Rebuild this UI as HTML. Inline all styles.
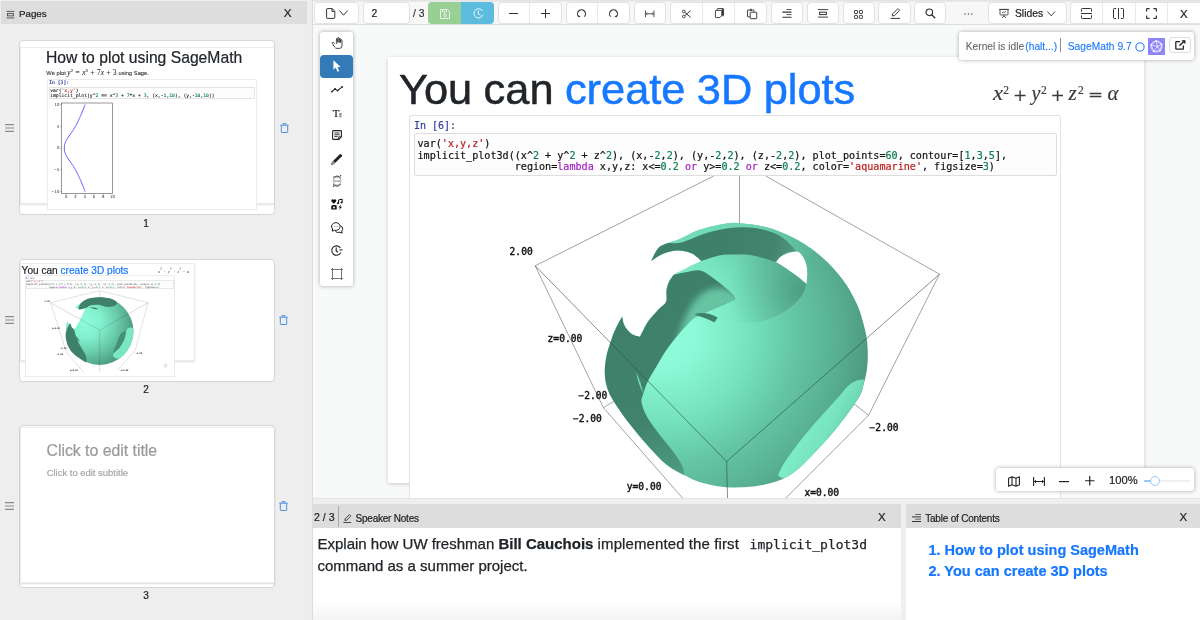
<!DOCTYPE html>
<html lang="en">
<head>
<meta charset="utf-8">
<title>Slides</title>
<style>
*{box-sizing:border-box;margin:0;padding:0}
html,body{width:1200px;height:620px;overflow:hidden;background:#fff}
body{position:relative;font-family:"Liberation Sans",sans-serif;color:#333;font-size:12px;-webkit-text-stroke:.2px}
.abs{position:absolute}
svg{display:block;overflow:visible}
#left,#toolbar,#canvas,#notes,#toc{will-change:transform}
/* left panel */
#left{left:0;top:0;width:307px;height:620px;background:#eee;overflow:hidden}
#lhead{left:1px;top:1px;width:306px;height:23.400px;background:#ddd}
.hx{font-size:11px;color:#222}
.card{background:#fff;border:1px solid #d6d6d6;border-radius:4px;overflow:hidden}
.pnum{font-size:10px;color:#222;width:20px;text-align:center}
/* dividers */
#vdiv{left:306.500px;top:0;width:6.500px;height:620px;background:#ededed;border-right:1px solid #dcdcdc}
#hdiv{left:313px;top:498px;width:887px;height:6px;background:#efefef;border-top:1px solid #e4e4e4}
#vdiv2{left:901px;top:504px;width:5.400px;height:116px;background:#efefef}
/* toolbar */
#toolbar{left:313px;top:0;width:887px;height:25.300px;background:#f7f7f7;border-bottom:1px solid #dedede}
.btn{position:absolute;top:2.300px;height:21.300px;background:#fff;border:1px solid #e2e2e2;border-radius:4px}
.sep{position:absolute;top:3px;width:1px;height:19.500px;background:#e8e8e8}
.ic{position:absolute}
/* canvas */
#canvas{left:313px;top:25px;width:887px;height:473px;border-top:1px solid #f8f9f9;background:#f8f9f9;overflow:hidden}
#slide{left:75px;top:31px;width:756px;height:426px;background:#fff;box-shadow:0 1px 4px rgba(0,0,0,.2)}
#cell{left:96px;top:89px;width:652px;height:440px;background:#fff;border:1px solid #e3e3e3;border-radius:2px}
.s{color:#ba2121}.n{color:#0a8050}.k{color:#a31fc4}
.sup{top:57px;font-size:11.5px;line-height:14px}.op{font-family:"DejaVu Serif",serif;font-size:17px}
.mono{font-family:"DejaVu Sans Mono","Liberation Mono",monospace}
/* bottom */
#notes{left:313px;top:504px;width:588px;height:116px;background:#fff}
#toc{left:906.400px;top:504px;width:293.600px;height:116px;background:#fff}
.phead{left:0;top:0;width:100%;height:24.200px;background:#ddd}
</style>
</head>
<body>

<!-- ================= LEFT PANEL ================= -->
<div id="left" class="abs">
  <div id="lhead" class="abs">
    <svg class="abs" style="left:5px;top:9.500px" width="9" height="7.800" viewBox="0 0 10 9"><path d="M0.5 0.5H9.5M0.5 8H9.5" stroke="#444" stroke-width="1" fill="none"/><rect x="1.5" y="3" width="7" height="2.6" fill="none" stroke="#444" stroke-width="1"/></svg>
    <div class="abs" style="left:18px;top:6.200px;font-size:9.800px;color:#222;line-height:14px;letter-spacing:-.05px">Pages</div>
    <div class="abs hx" style="left:282.800px;top:5.300px;line-height:14px;font-size:11.800px">X</div>
  </div>
  <!--LEFT-->
<div class="card abs" style="left:18.500px;top:39.500px;width:256px;height:175.500px"></div>
<div class="abs" style="left:20px;top:47px;width:254px;height:156.500px;border:1px solid #ececec;border-right:0;box-shadow:0 1px 1.500px rgba(0,0,0,.12)"></div>
<div class="abs" style="left:46px;top:47.500px;font-size:15.700px;line-height:19px;color:#212529;white-space:nowrap">How to plot using SageMath</div>
<div class="abs" style="left:46.300px;top:68.600px;font-size:5.780px;line-height:8px;color:#333;white-space:nowrap;-webkit-text-stroke:.1px">We plot <span style="font-family:'Liberation Serif',serif;font-size:7.200px;word-spacing:.5px;letter-spacing:.12px"><i>y</i><sup style="font-size:4.800px;line-height:0">2</sup> = <i>x</i><sup style="font-size:4.800px;line-height:0">3</sup> + 7<i>x</i> + 3</span> using Sage.</div>
<div class="abs" style="left:47px;top:78.500px;width:209.500px;height:131px;background:#fff;border:1px solid #ebebeb"></div>
<div class="abs mono" style="left:49.300px;top:80.300px;font-size:4.700px;line-height:6px;color:#303f9f;white-space:pre">In [3]:</div>
<div class="abs" style="left:48.500px;top:86.500px;width:206px;height:12.800px;border:1px solid #e4e4e4;background:#fdfdfd"></div>
<pre class="abs mono" style="left:50.200px;top:87.600px;font-size:4.720px;line-height:5.300px;color:#111;-webkit-text-stroke:.08px">var(<span class="s">'x,y'</span>)
implicit_plot(y^<span class="n">2</span> == x^<span class="n">3</span> + <span class="n">7</span>*x + <span class="n">3</span>, (x,-<span class="n">1</span>,<span class="n">10</span>), (y,-<span class="n">10</span>,<span class="n">10</span>))</pre>
<svg class="abs" style="left:0;top:0" width="307" height="230" viewBox="0 0 307 230"><rect x="61.6" y="103.0" width="50.8" height="90.4" fill="#fff" stroke="#333" stroke-width=".5"/><path d="M85.10 191.60L84.70 190.51L84.28 189.42L83.87 188.33L83.44 187.25L83.01 186.16L82.58 185.07L82.13 183.98L81.68 182.89L81.23 181.80L80.76 180.71L80.28 179.62L79.80 178.53L79.30 177.45L78.79 176.36L78.27 175.27L77.74 174.18L77.19 173.09L76.63 172.00L76.05 170.91L75.45 169.83L74.84 168.74L74.20 167.65L73.53 166.56L72.85 165.47L72.13 164.38L71.39 163.29L70.63 162.20L69.85 161.12L69.07 160.03L68.30 158.94L67.56 157.85L66.88 156.76L66.26 155.67L65.72 154.58L65.28 153.49L64.91 152.41L64.64 151.32L64.44 150.23L64.33 149.14L64.29 148.05L64.33 146.96L64.44 145.87L64.64 144.78L64.91 143.70L65.28 142.61L65.72 141.52L66.26 140.43L66.88 139.34L67.56 138.25L68.30 137.16L69.07 136.07L69.85 134.99L70.63 133.90L71.39 132.81L72.13 131.72L72.85 130.63L73.53 129.54L74.20 128.45L74.84 127.36L75.45 126.28L76.05 125.19L76.63 124.10L77.19 123.01L77.74 121.92L78.27 120.83L78.79 119.74L79.30 118.65L79.80 117.57L80.28 116.48L80.76 115.39L81.23 114.30L81.68 113.21L82.13 112.12L82.58 111.03L83.01 109.94L83.44 108.86L83.87 107.77L84.28 106.68L84.70 105.59L85.10 104.50" fill="none" stroke="#4b4bff" stroke-width=".9"/><path d="M60.4 104.5H61.6M60.4 126.3H61.6M60.4 148.1H61.6M60.4 169.8H61.6M60.4 191.6H61.6M66.2 193.4V194.6M75.5 193.4V194.6M84.7 193.4V194.6M93.9 193.4V194.6M103.2 193.4V194.6M112.4 193.4V194.6" stroke="#333" stroke-width=".4" fill="none"/><g font-family="'DejaVu Sans',sans-serif" font-size="3.900" fill="#222"><text x="59.4" y="105.7" text-anchor="end">10</text><text x="59.4" y="127.5" text-anchor="end">5</text><text x="59.4" y="149.2" text-anchor="end">0</text><text x="59.4" y="171.0" text-anchor="end">−5</text><text x="59.4" y="192.8" text-anchor="end">−10</text><text x="66.2" y="198.4" text-anchor="middle">0</text><text x="75.5" y="198.4" text-anchor="middle">2</text><text x="84.7" y="198.4" text-anchor="middle">4</text><text x="93.9" y="198.4" text-anchor="middle">6</text><text x="103.2" y="198.4" text-anchor="middle">8</text><text x="112.4" y="198.4" text-anchor="middle">10</text></g></svg>
<div class="pnum abs" style="left:136px;top:217.500px;line-height:12px">1</div>
<svg class="ic" style="left:5px;top:123.7px" width="9" height="8" viewBox="0 0 9 8"><path d="M0 .6H9M0 4H9M0 7.400H9" stroke="#8a8a8a" stroke-width="1.100" fill="none"/></svg>
<svg class="ic" style="left:279.5px;top:123px" width="9" height="10" viewBox="0 0 9 10"><path d="M.3 2.200H8.700M3 2V.9a.4.400 0 0 1 .4-.4H5.600a.4.400 0 0 1 .4.400V2M1.300 2.400V8.800a.7.700 0 0 0 .7.700H7a.7.700 0 0 0 .7-.7V2.400" fill="none" stroke="#4a8fe0" stroke-width="1"/></svg>
<div class="card abs" style="left:18.500px;top:258.500px;width:256px;height:123px"></div>
<div class="abs" style="left:20px;top:262.500px;width:174.500px;height:98px;background:#fff;border:1px solid #ececec;box-shadow:0 1px 1.500px rgba(0,0,0,.14)"></div>
<div class="abs" style="left:21.600px;top:264.700px;font-size:10.100px;line-height:12px;color:#212529;white-space:nowrap">You can <span style="color:#1677ff">create 3D plots</span></div>
<div class="abs" style="left:158px;top:269px;-webkit-text-stroke:0;font-family:'Liberation Serif',serif;font-size:4.600px;line-height:6px;color:#444;white-space:nowrap;letter-spacing:.25px"><i>x</i><sup style="font-size:3px;line-height:0">2</sup> + <i>y</i><sup style="font-size:3px;line-height:0">2</sup> + <i>z</i><sup style="font-size:3px;line-height:0">2</sup> = <i>α</i></div>
<div class="abs" style="left:24.500px;top:275.300px;width:150px;height:101.500px;background:#fff;border:1px solid #ebebeb"></div>
<div class="abs mono" style="left:25.800px;top:276.500px;font-size:2.320px;line-height:3px;color:#303f9f;white-space:pre;-webkit-text-stroke:0">In [6]:</div>
<div class="abs" style="left:25.500px;top:279.600px;width:148px;height:9.600px;border:1px solid #e9e9e9;background:#fdfdfd"></div>
<pre class="abs mono" style="left:26.500px;top:281.400px;font-size:2.320px;line-height:2.760px;color:#333;-webkit-text-stroke:0">var(<span class="s">'x,y,z'</span>)
implicit_plot3d((x^<span class="n">2</span> + y^<span class="n">2</span> + z^<span class="n">2</span>), (x,-<span class="n">2</span>,<span class="n">2</span>), (y,-<span class="n">2</span>,<span class="n">2</span>), (z,-<span class="n">2</span>,<span class="n">2</span>), plot_points=<span class="n">60</span>, contour=[<span class="n">1</span>,<span class="n">3</span>,<span class="n">5</span>],
                region=<span class="k">lambda</span> x,y,z: x&lt;=<span class="n">0.2</span> <span class="k">or</span> y&gt;=<span class="n">0.2</span> <span class="k">or</span> z&lt;=<span class="n">0.2</span>, color=<span class="s">'aquamarine'</span>, figsize=<span class="n">3</span>)</pre>
<svg class="abs" style="left:0;top:240px" width="307" height="160" viewBox="0 240 307 160">
<defs><radialGradient id="gMini" gradientUnits="userSpaceOnUse" cx="86" cy="322" r="54"><stop offset="0" stop-color="#90fdda"/><stop offset=".3" stop-color="#82efcc"/><stop offset=".6" stop-color="#66c8a7"/><stop offset=".85" stop-color="#4f9f84"/><stop offset="1" stop-color="#448b73"/></radialGradient></defs>
<path d="M99.700 290.600L50.500 302.700L66.600 352.700L83.500 372.100M99.700 290.600L148 302.700L135.200 350.300L117.400 370.500M99.700 290.600V298" fill="none" stroke="#b5b5b5" stroke-width=".4"/>
<circle cx="99.600" cy="331.100" r="33.800" fill="url(#gMini)"/>
<path d="M78.9 309.3L85.3 308.4L82.7 314.5L79.5 320.9L75.6 327.4L74.3 330.0L71.8 327.4L70.2 323.8L64.0 320.0L70.0 304.0Z" fill="#fff"/>
<path d="M78.9 309.3C78.2 308.5 79.4 305.2 80.8 303.5C82.2 301.8 84.2 300.0 87.2 299.0C90.2 298.0 94.9 297.4 98.8 297.3C102.7 297.2 107.4 297.8 110.4 298.6C113.4 299.4 116.2 301.1 116.9 302.3C117.6 303.6 116.0 305.4 114.3 306.1C112.6 306.9 109.2 307.0 106.6 306.8C104.0 306.6 101.4 305.1 98.8 304.8C96.2 304.5 93.3 304.6 91.1 305.2C88.8 305.8 87.3 307.4 85.3 308.1C83.3 308.8 79.7 310.1 78.9 309.3Z" fill="#3f806b"/>
<path d="M70.2 323.8C69.5 324.0 68.1 326.8 67.3 328.7C66.5 330.6 65.6 332.5 65.6 335.1C65.6 337.7 66.3 341.4 67.3 344.2C68.3 347.0 69.8 349.5 71.8 351.9C73.8 354.2 77.2 356.6 79.5 358.3C81.8 360.0 84.8 362.1 85.9 362.2C87.1 362.3 86.5 360.3 86.4 359.0C86.3 357.7 86.2 356.6 85.3 354.5C84.4 352.4 82.3 349.5 80.8 346.7C79.3 343.9 77.4 340.5 76.3 337.7C75.2 334.9 75.0 331.7 74.3 330.0C73.5 328.3 72.5 328.4 71.8 327.4C71.1 326.4 71.0 323.6 70.2 323.8Z" fill="#3f806b"/>
<path d="M124.6 331.6C125.6 331.0 126.6 328.8 126.6 330.0C126.6 331.2 125.8 336.0 124.6 339.0C123.4 342.0 121.3 345.6 119.5 348.0C117.7 350.4 114.7 352.8 113.7 353.2C112.7 353.6 113.2 352.3 113.7 350.6C114.2 348.9 115.7 345.7 116.9 342.9C118.1 340.1 119.5 335.7 120.8 333.8C122.1 331.9 123.6 332.2 124.6 331.6Z" fill="#468f77"/>
<path d="M126.6 330.0C127.5 328.1 128.9 327.8 130.0 327.6C131.1 327.4 132.7 327.4 133.2 329.0C133.7 330.6 133.6 334.1 133.0 337.0C132.4 339.9 131.0 343.5 129.5 346.5C128.0 349.5 125.9 353.0 124.0 355.0C122.1 357.0 119.7 358.3 118.0 358.6C116.3 358.9 114.4 357.9 113.7 357.0C113.0 356.1 112.7 354.7 113.7 353.2C114.7 351.7 117.7 350.4 119.5 348.0C121.3 345.6 123.4 342.0 124.6 339.0C125.8 336.0 125.7 331.9 126.6 330.0Z" fill="#7ae6c2"/>
<path d="M89.800 307.400C93 306.800 96 307.600 98.800 309.300C95.500 309.300 92.500 308.600 89.800 307.400ZM74.300 334.500C75.500 338 77.500 340.500 80.100 341.600C78.600 339 76.500 336.500 74.300 334.500Z" fill="#3f806b"/>
<path d="M50.500 302.700L99.700 330.200L148 302.700M99.700 330.200V372.100" fill="none" stroke="#333" stroke-opacity=".45" stroke-width=".4"/>
<g font-family="'DejaVu Sans Mono',monospace" font-weight="bold" font-size="2.200" fill="#222"><text x="44.600" y="301.500">2.00</text><text x="52" y="329">z=0.00</text><text x="60" y="349.300">−2.00</text><text x="56.500" y="354.500">−2.00</text><text x="70" y="370.800">y=0.00</text><text x="120.500" y="370.800">x=0.00</text><text x="135.500" y="354.300">−2.00</text></g>
<path d="M164.600 364.300H166.600V366.800H164.600Z" fill="none" stroke="#aaa" stroke-width=".4"/>
</svg>
<div class="pnum abs" style="left:136px;top:383.600px;line-height:12px">2</div>
<svg class="ic" style="left:5px;top:316px" width="9" height="8" viewBox="0 0 9 8"><path d="M0 .6H9M0 4H9M0 7.400H9" stroke="#8a8a8a" stroke-width="1.100" fill="none"/></svg>
<svg class="ic" style="left:279.3px;top:315.3px" width="9" height="10" viewBox="0 0 9 10"><path d="M.3 2.200H8.700M3 2V.9a.4.400 0 0 1 .4-.4H5.600a.4.400 0 0 1 .4.400V2M1.300 2.400V8.800a.7.700 0 0 0 .7.700H7a.7.700 0 0 0 .7-.7V2.400" fill="none" stroke="#4a8fe0" stroke-width="1"/></svg>
<div class="card abs" style="left:18.500px;top:424.500px;width:256px;height:163px"></div>
<div class="abs" style="left:20px;top:427px;width:254.500px;height:155.500px;border:1px solid #ececec;border-right:0;box-shadow:0 1px 1.500px rgba(0,0,0,.14)"></div>
<div class="abs" style="left:46.500px;top:440.500px;font-size:15.800px;line-height:19px;color:#999;white-space:nowrap">Click to edit title</div>
<div class="abs" style="left:46.700px;top:467.300px;font-size:9.450px;line-height:12px;color:#a6a6a6;white-space:nowrap">Click to edit subtitle</div>
<div class="pnum abs" style="left:136px;top:589.800px;line-height:12px">3</div>
<svg class="ic" style="left:5px;top:501.8px" width="9" height="8" viewBox="0 0 9 8"><path d="M0 .6H9M0 4H9M0 7.400H9" stroke="#8a8a8a" stroke-width="1.100" fill="none"/></svg>
<svg class="ic" style="left:279.3px;top:500.8px" width="9" height="10" viewBox="0 0 9 10"><path d="M.3 2.200H8.700M3 2V.9a.4.400 0 0 1 .4-.4H5.600a.4.400 0 0 1 .4.400V2M1.300 2.400V8.800a.7.700 0 0 0 .7.700H7a.7.700 0 0 0 .7-.7V2.400" fill="none" stroke="#4a8fe0" stroke-width="1"/></svg>
<!--/LEFT-->
</div>

<div id="vdiv" class="abs"></div>

<!-- ================= TOOLBAR ================= -->
<div id="toolbar" class="abs">
  <!-- coordinates inside toolbar are page x - 313 -->
  <div class="abs" style="left:0;top:0;width:887px;height:2.300px;background:linear-gradient(to bottom,#e2e2e2,#ebebeb)"></div>
  <div class="btn" style="left:1px;width:45px"></div>
  <svg class="ic" style="left:13px;top:8px" width="10" height="11" viewBox="0 0 10 11"><path d="M1.2 0.6H6.2L8.8 3.2V9.6a.8.8 0 0 1-.8.8H1.2a.6.6 0 0 1-.6-.6V1.2a.6.6 0 0 1 .6-.6Z" fill="none" stroke="#333" stroke-width="1"/><path d="M6 0.8V3.4H8.6" fill="none" stroke="#333" stroke-width="1"/></svg>
  <svg class="ic" style="left:26px;top:10px" width="9" height="6" viewBox="0 0 9 6"><path d="M0.4 0.5L4.5 5.2L8.6 0.5" fill="none" stroke="#333" stroke-width="1"/></svg>

  <div class="btn" style="left:50px;width:47px"></div>
  <div class="abs" style="left:58.5px;top:7px;font-size:10.3px;line-height:13px;color:#222">2</div>
  <div class="abs" style="left:100px;top:7px;font-size:10.3px;line-height:13px;color:#333">/ 3</div>

  <div class="abs" style="left:115px;top:2px;width:33px;height:22px;background:#98cf94;border-radius:4px 0 0 4px"></div>
  <div class="abs" style="left:148px;top:2px;width:33px;height:22px;background:#5bbcdd;border-radius:0 4px 4px 0"></div>
  <svg class="ic" style="left:127px;top:9px" width="10" height="10" viewBox="0 0 10 10"><path d="M0.5 0.5H7.5L9.5 2.5V9.5H0.5Z" fill="none" stroke="#e9f5e8" stroke-width="1"/><path d="M2.5 0.5V3H6.5V0.5" fill="none" stroke="#e9f5e8" stroke-width="1"/><circle cx="5" cy="6.2" r="1.3" fill="none" stroke="#e9f5e8" stroke-width="1"/></svg>
  <svg class="ic" style="left:160px;top:8px" width="11" height="11" viewBox="0 0 11 11"><path d="M9.6 3.2A4.6 4.6 0 1 0 9.9 6.8" fill="none" stroke="#eef8fc" stroke-width="1"/><path d="M5.3 2.6V5.8L7.6 7.3" fill="none" stroke="#eef8fc" stroke-width="1"/></svg>

  <!-- zoom out / in -->
  <div class="btn" style="left:184.5px;width:64.5px"></div><div class="sep" style="left:216px"></div>
  <svg class="ic" style="left:196px;top:13px" width="9" height="1"><rect width="9" height="1" fill="#333"/></svg>
  <svg class="ic" style="left:228px;top:9px" width="9" height="9" viewBox="0 0 9 9"><path d="M0 4.5H9M4.5 0V9" stroke="#333" stroke-width="1" fill="none"/></svg>

  <!-- undo / redo -->
  <div class="btn" style="left:252.5px;width:64.5px"></div><div class="sep" style="left:284px"></div>
  <svg class="ic" style="left:263px;top:8px" width="11" height="11" viewBox="0 0 11 11"><path d="M2.6 8.6A4 4 0 1 1 8.4 8.6" fill="none" stroke="#333" stroke-width="1.1"/><path d="M1.6 7.2L2.7 9.6L4.6 8.2Z" fill="#333"/></svg>
  <svg class="ic" style="left:295px;top:8px" width="11" height="11" viewBox="0 0 11 11"><path d="M2.6 8.6A4 4 0 1 1 8.4 8.6" fill="none" stroke="#333" stroke-width="1.1"/><path d="M9.4 7.2L8.3 9.6L6.4 8.2Z" fill="#333"/></svg>

  <!-- fit width -->
  <div class="btn" style="left:320.6px;width:32.2px"></div>
  <svg class="ic" style="left:332px;top:9.700px" width="9.500" height="7.600" viewBox="0 0 11 9"><path d="M0.5 0.5V8.5M10.5 0.5V8.5M1.5 4.5H9.5" stroke="#333" stroke-width="1" fill="none"/><path d="M2.6 3.2L1.2 4.5L2.6 5.8M8.4 3.2L9.8 4.5L8.4 5.8" stroke="#333" stroke-width=".9" fill="none"/></svg>

  <!-- cut / copy / paste -->
  <div class="btn" style="left:356.5px;width:97.5px"></div><div class="sep" style="left:389px"></div><div class="sep" style="left:421px"></div>
  <svg class="ic" style="left:369px;top:8.500px" width="9.600" height="10" viewBox="0 0 11 11"><circle cx="2" cy="2.6" r="1.5" fill="none" stroke="#333" stroke-width="1"/><circle cx="2" cy="8.4" r="1.5" fill="none" stroke="#333" stroke-width="1"/><path d="M3.2 3.6L10 9.4M3.2 7.4L10 1.6" stroke="#333" stroke-width="1.1" fill="none"/></svg>
  <svg class="ic" style="left:401.500px;top:8.300px" width="9" height="10.200" viewBox="0 0 10 11"><path d="M2.5 2.5V1a.5.5 0 0 1 .5-.5H9a.5.5 0 0 1 .5.5V8a.5.5 0 0 1-.5.5H7.6" fill="none" stroke="#333" stroke-width="1"/><path d="M1 2.5H7a.5.5 0 0 1 .5.5V8L5.5 10.5H1a.5.5 0 0 1-.5-.5V3a.5.5 0 0 1 .5-.5Z" fill="none" stroke="#333" stroke-width="1"/><rect x="7.6" y="1" width="1.6" height="7" fill="#333"/></svg>
  <svg class="ic" style="left:433.500px;top:7.600px" width="10.200" height="11.200" viewBox="0 0 11 12"><path d="M3.2 9.5H1a.5.5 0 0 1-.5-.5V2.5A.5.5 0 0 1 1 2H2.4M5.8 2H7a.5.5 0 0 1 .5.5V4" fill="none" stroke="#333" stroke-width="1"/><path d="M2.6 2.6L4.1.8L5.6 2.6Z" fill="none" stroke="#333" stroke-width="1"/><path d="M4 4.5H10a.5.5 0 0 1 .5.5V11a.5.5 0 0 1-.5.5H4a.5.5 0 0 1-.5-.5V5a.5.5 0 0 1 .5-.5Z" fill="#fff" stroke="#333" stroke-width="1"/></svg>

  <!-- toc -->
  <div class="btn" style="left:457.7px;width:32.2px"></div>
  <svg class="ic" style="left:469px;top:9px" width="10" height="9" viewBox="0 0 10 9"><path d="M4.5 0.5H9.5M4.5 5.6H9.5" stroke="#555" stroke-width="1" fill="none"/><path d="M0.4 3.1H9.5M0.4 8.2H9.5" stroke="#333" stroke-width="1.1" fill="none"/></svg>
  <!-- pages -->
  <div class="btn" style="left:493.6px;width:32.2px"></div>
  <svg class="ic" style="left:505px;top:9px" width="10" height="9" viewBox="0 0 10 9"><path d="M0 0.6H10M0 8.1H10" stroke="#444" stroke-width="1" fill="none"/><rect x="1.6" y="3.2" width="6.8" height="2.4" fill="none" stroke="#333" stroke-width="1"/></svg>
  <!-- grid -->
  <div class="btn" style="left:529.5px;width:32.2px"></div>
  <svg class="ic" style="left:541px;top:9.5px" width="9" height="9" viewBox="0 0 10 10"><rect x=".5" y=".5" width="3.4" height="3.4" rx=".6" fill="none" stroke="#333"/><rect x="6" y=".5" width="3.4" height="3.4" rx=".6" fill="none" stroke="#333"/><rect x=".5" y="6" width="3.4" height="3.4" rx=".6" fill="none" stroke="#333"/><rect x="6" y="6" width="3.4" height="3.4" rx=".6" fill="none" stroke="#333"/></svg>
  <!-- pen -->
  <div class="btn" style="left:565.4px;width:32.2px"></div>
  <svg class="ic" style="left:577px;top:8px" width="11" height="11" viewBox="0 0 11 11"><path d="M0.5 10.4H10" stroke="#333" stroke-width="1" fill="none"/><path d="M2.2 7.8L2.6 5.8L7.4 1.1a.8.8 0 0 1 1.1 0l.7.7a.8.8 0 0 1 0 1.1L4.4 7.7Z" fill="none" stroke="#333" stroke-width="1"/></svg>
  <!-- search -->
  <div class="btn" style="left:601.3px;width:32.2px"></div>
  <svg class="ic" style="left:612px;top:8px" width="11" height="11" viewBox="0 0 11 11"><circle cx="4.3" cy="4.3" r="3.3" fill="none" stroke="#333" stroke-width="1.2"/><path d="M6.8 6.8L10.2 10.2" stroke="#333" stroke-width="1.3" fill="none"/></svg>
  <!-- ellipsis -->
  <svg class="ic" style="left:651px;top:13px" width="9" height="2" viewBox="0 0 9 2"><circle cx="1" cy="1" r=".7" fill="#444"/><circle cx="4.4" cy="1" r=".7" fill="#444"/><circle cx="7.8" cy="1" r=".7" fill="#444"/></svg>

  <!-- Slides dropdown -->
  <div class="btn" style="left:674.5px;width:79.2px"></div>
  <svg class="ic" style="left:686px;top:9px" width="10" height="9.2" viewBox="0 0 12 11"><path d="M0 0.5H12" stroke="#333" stroke-width="1" fill="none"/><rect x="1.2" y=".5" width="9.6" height="6.6" rx=".8" fill="none" stroke="#333" stroke-width="1"/><path d="M3.4 4.9L5 3.4L6.3 4.6L8.4 2.6" stroke="#333" stroke-width=".9" fill="none"/><path d="M6 7.2V8.6M3.6 10.6L6 8.4L8.4 10.6" stroke="#333" stroke-width="1" fill="none"/></svg>
  <div class="abs" style="left:702px;top:7px;font-size:10.3px;line-height:13px;color:#222">Slides</div>
  <svg class="ic" style="left:734px;top:10.5px" width="8.5" height="5.6" viewBox="0 0 9 6"><path d="M0.4 0.5L4.5 5.2L8.6 0.5" fill="none" stroke="#333" stroke-width="1"/></svg>

  <!-- frame controls -->
  <div class="btn" style="left:757px;width:131px;border-radius:4px 0 0 4px;border-right:0"></div>
  <div class="sep" style="left:789px"></div><div class="sep" style="left:822px"></div><div class="sep" style="left:854px"></div>
  <svg class="ic" style="left:768px;top:8px" width="11" height="11" viewBox="0 0 11 11"><path d="M0.5 3.6V1.3a.8.8 0 0 1 .8-.8H9.7a.8.8 0 0 1 .8.8V3.6M0.5 7.4V9.7a.8.8 0 0 0 .8.8H9.7a.8.8 0 0 0 .8-.8V7.4M0 5.5H11" fill="none" stroke="#333" stroke-width="1"/></svg>
  <svg class="ic" style="left:800px;top:8px" width="11" height="11" viewBox="0 0 11 11"><path d="M3.2.5H1.3a.8.8 0 0 0-.8.8V9.7a.8.8 0 0 0 .8.8H3.2M7.8.5H9.7a.8.8 0 0 1 .8.8V9.7a.8.8 0 0 1-.8.8H7.8M5.5 0V11" fill="none" stroke="#333" stroke-width="1"/></svg>
  <svg class="ic" style="left:833px;top:8px" width="11" height="11" viewBox="0 0 11 11"><path d="M0.6 3.6V1.2a.6.6 0 0 1 .6-.6H3.6M7.4.6H9.8a.6.6 0 0 1 .6.6V3.6M10.4 7.4V9.8a.6.6 0 0 1-.6.6H7.4M3.6 10.4H1.2a.6.6 0 0 1-.6-.6V7.4" fill="none" stroke="#333" stroke-width="1.2"/></svg>
  <div class="abs hx" style="left:867px;top:6.600px;line-height:14px;font-size:11.500px">X</div>
</div>

<!-- ================= CANVAS ================= -->
<div id="canvas" class="abs">
  <div id="slide" class="abs"></div>
  <div id="title" class="abs" style="left:86px;top:37px;font-size:43.4px;line-height:52px;color:#212529;white-space:nowrap;word-spacing:-.7px;-webkit-text-stroke:.5px">You can <span style="color:#1677ff">create 3D plots</span></div>
  <!-- formula -->
  <div id="formula" class="abs" style="left:0;top:0;-webkit-text-stroke:.18px;font-family:'Liberation Serif',serif;color:#3a3a3a;font-size:20px;line-height:24px;white-space:nowrap">
    <i class="abs" style="left:680px;top:55px;font-size:21px;transform:scaleX(1.08);transform-origin:0 0">x</i><span class="abs sup" style="left:690.3px">2</span>
    <span class="abs op" style="left:700px;top:56.5px">+</span>
    <i class="abs" style="left:718.5px;top:55px">y</i><span class="abs sup" style="left:728px">2</span>
    <span class="abs op" style="left:737.5px;top:56.5px">+</span>
    <i class="abs" style="left:755.5px;top:55px;font-size:21px">z</i><span class="abs sup" style="left:765px">2</span>
    <span class="abs op" style="left:775px;top:56px;transform:scaleX(1.06);transform-origin:0 0">=</span>
    <i class="abs" style="left:794.5px;top:55px;font-size:21px">α</i>
  </div>
  <div id="cell" class="abs">
    <div class="abs mono" style="left:4px;top:4px;font-size:10px;line-height:12px;color:#303f9f;white-space:pre">In [6]:</div>
    <div class="abs" style="left:3.5px;top:17px;width:643px;height:43px;border:1px solid #ddd;border-radius:2px;background:#fdfdfd"></div>
    <pre class="abs mono" style="left:7.5px;top:21.900px;font-size:10.1px;line-height:11.75px;color:#111">var(<span class="s">'x,y,z'</span>)
implicit_plot3d((x^<span class="n">2</span> + y^<span class="n">2</span> + z^<span class="n">2</span>), (x,-<span class="n">2</span>,<span class="n">2</span>), (y,-<span class="n">2</span>,<span class="n">2</span>), (z,-<span class="n">2</span>,<span class="n">2</span>), plot_points=<span class="n">60</span>, contour=[<span class="n">1</span>,<span class="n">3</span>,<span class="n">5</span>],
                region=<span class="k">lambda</span> x,y,z: x&lt;=<span class="n">0.2</span> <span class="k">or</span> y&gt;=<span class="n">0.2</span> <span class="k">or</span> z&lt;=<span class="n">0.2</span>, color=<span class="s">'aquamarine'</span>, figsize=<span class="n">3</span>)</pre>
  </div>

  <!--PLOT3D--><svg id="plot3d" class="abs" style="left:0;top:0" width="887" height="472" viewBox="313 26 887 472">
<defs>
<radialGradient id="gBody" gradientUnits="userSpaceOnUse" cx="664" cy="334" r="232">
<stop offset="0" stop-color="#90fdda"/><stop offset=".14" stop-color="#8dfad7"/><stop offset=".38" stop-color="#75e1bd"/><stop offset=".56" stop-color="#64c6a5"/><stop offset=".72" stop-color="#5ab494"/><stop offset=".85" stop-color="#50a086"/><stop offset=".94" stop-color="#468f77"/><stop offset="1" stop-color="#3f836c"/>
</radialGradient>
<linearGradient id="gBand" gradientUnits="userSpaceOnUse" x1="693" y1="297" x2="706" y2="316">
<stop offset="0" stop-color="#3f806b"/><stop offset="1" stop-color="#62bd9d"/>
</linearGradient>
<linearGradient id="gD2" gradientUnits="userSpaceOnUse" x1="730" y1="240" x2="802" y2="252">
<stop offset="0" stop-color="#3f806b"/><stop offset=".6" stop-color="#42856e"/><stop offset="1" stop-color="#549f86"/>
</linearGradient>
<linearGradient id="gD1" gradientUnits="userSpaceOnUse" x1="620" y1="330" x2="680" y2="470">
<stop offset="0" stop-color="#3f806b"/><stop offset=".6" stop-color="#40826c"/><stop offset="1" stop-color="#4c9a80"/>
</linearGradient>
<linearGradient id="gEll" gradientUnits="userSpaceOnUse" x1="800" y1="420" x2="850" y2="445">
<stop offset="0" stop-color="#80edc9"/><stop offset=".5" stop-color="#78e4c0"/><stop offset="1" stop-color="#66c9a8"/>
</linearGradient>
<radialGradient id="gM" gradientUnits="userSpaceOnUse" cx="800" cy="292" r="72">
<stop offset="0" stop-color="#3c7f68" stop-opacity=".5"/><stop offset=".45" stop-color="#3c7f68" stop-opacity=".24"/><stop offset="1" stop-color="#3c7f68" stop-opacity="0"/>
</radialGradient>
<linearGradient id="gRim" gradientUnits="userSpaceOnUse" x1="670" y1="240" x2="810" y2="250">
<stop offset="0" stop-color="#74dfbb"/><stop offset=".6" stop-color="#6cd3b0"/><stop offset="1" stop-color="#5cb797"/>
</linearGradient>
<clipPath id="cpD13"><path d="M673.7 274.7C675.7 274.3 681.4 273.0 685.8 272.3C690.2 271.6 695.2 269.5 700.0 270.6C704.8 271.7 710.1 276.0 714.5 279.0C718.9 282.0 723.4 285.9 726.6 288.7C729.8 291.5 732.5 294.2 733.9 296.0C735.3 297.8 734.8 299.0 735.0 299.6C733.2 300.4 728.4 302.6 724.2 304.4C720.0 306.2 713.7 308.7 709.7 310.5C705.7 312.3 702.6 314.1 700.0 315.3C697.4 316.6 696.3 316.2 693.9 318.0C691.5 319.8 688.5 323.0 685.8 325.9C683.1 328.8 681.2 330.8 677.7 335.2C674.2 339.6 669.0 346.2 665.1 352.0C661.2 357.8 657.5 364.8 654.5 369.8C651.5 374.8 649.3 378.1 647.4 382.2C645.5 386.3 644.0 391.2 643.0 394.6C642.0 398.0 641.0 398.7 641.6 402.4C642.2 406.1 644.0 411.3 646.9 416.6C649.8 421.9 654.9 428.4 659.3 434.3C663.7 440.2 669.7 446.7 673.5 452.0C677.3 457.3 680.5 462.3 682.3 466.2C684.1 470.1 683.8 473.6 684.1 475.1C681.1 473.3 672.3 469.2 666.4 464.5C660.5 459.8 654.6 453.2 648.7 446.7C642.8 440.2 636.2 432.3 630.9 425.5C625.6 418.7 620.5 411.9 616.7 406.0C612.9 400.1 609.9 395.4 607.9 390.0C605.9 384.6 605.0 379.0 604.8 373.3C604.6 367.6 605.4 361.5 606.6 355.6C607.8 349.7 610.2 342.6 611.9 337.9C613.5 333.1 614.8 330.7 616.5 327.1C618.2 323.6 621.2 318.4 622.1 316.6C622.5 318.1 623.0 322.7 624.5 325.5C626.0 328.3 628.5 331.6 631.0 333.5C633.5 335.4 638.3 336.2 639.8 336.8C640.2 336.0 640.8 334.6 642.3 331.9C643.8 329.2 646.0 324.4 648.7 320.6C651.4 316.9 655.7 312.2 658.4 309.4C661.1 306.6 663.7 304.6 664.8 303.7C665.1 303.0 666.2 302.0 666.5 299.7C666.8 297.4 666.1 293.0 666.5 290.0C666.9 287.0 667.7 284.4 668.9 281.9C670.1 279.3 672.9 275.9 673.7 274.7Z"/></clipPath>
<filter id="fBlur" x="-30%" y="-30%" width="160%" height="160%"><feGaussianBlur stdDeviation="3.2"/></filter>
<clipPath id="cpPlot"><rect x="410.5" y="176" width="649.5" height="330"/></clipPath>
</defs>
<g clip-path="url(#cpPlot)">
<path d="M535.2 265.8L713.7 176M739.5 176V224M765.7 176L939.5 274.2L868.6 415.2M535.2 265.8L603.4 407.7L682.3 497.8L690 506.600M868.6 415.2L786 497.8L777 506.800M603.4 407.7L616 400M868.6 415.2L853 403" fill="none" stroke="#8a8a8a" stroke-width=".8"/>
<path d="M740.0 223.2C744.4 223.9 757.7 224.8 766.6 227.2C775.5 229.6 785.2 233.8 793.2 237.8C801.2 241.8 808.0 246.2 814.5 251.1C821.0 256.0 826.9 261.4 832.2 267.0C837.5 272.6 842.6 279.2 846.4 284.8C850.2 290.4 853.0 296.3 855.2 300.7C857.4 305.1 858.0 305.7 859.8 311.3C861.6 316.9 864.7 327.5 866.0 334.3C867.3 341.1 867.6 346.1 867.8 352.0C867.9 357.9 867.6 364.2 866.9 369.8C866.1 375.4 864.4 381.4 863.3 385.7C862.1 389.9 862.1 391.3 860.0 395.3C857.9 399.3 855.2 403.3 850.7 409.5C846.2 415.7 838.9 425.5 833.0 432.6C827.1 439.7 820.8 446.1 815.2 452.0C809.6 457.9 804.3 463.7 799.3 468.0C794.3 472.3 789.8 475.3 785.1 477.8C780.4 480.3 776.2 481.6 770.9 483.1C765.6 484.6 760.6 485.9 753.2 486.6C745.8 487.3 735.5 487.9 726.6 487.2C717.7 486.5 707.1 484.2 700.0 482.2C692.9 480.2 689.7 478.1 684.1 475.1C678.5 472.2 672.3 469.2 666.4 464.5C660.5 459.8 654.6 453.2 648.7 446.7C642.8 440.2 636.2 432.3 630.9 425.5C625.6 418.7 620.5 411.9 616.7 406.0C612.9 400.1 609.9 395.4 607.9 390.0C605.9 384.6 605.0 379.0 604.8 373.3C604.6 367.6 605.4 361.5 606.6 355.6C607.8 349.7 610.2 342.6 611.9 337.9C613.5 333.1 614.8 330.7 616.5 327.1C618.2 323.6 621.2 318.4 622.1 316.6C622.5 318.1 623.0 322.7 624.5 325.5C626.0 328.3 628.5 331.6 631.0 333.5C633.5 335.4 638.3 336.2 639.8 336.8C640.2 336.0 640.8 334.6 642.3 331.9C643.8 329.2 646.0 324.4 648.7 320.6C651.4 316.9 655.7 312.2 658.4 309.4C661.1 306.6 663.7 304.6 664.8 303.7C665.1 303.0 666.2 302.0 666.5 299.7C666.8 297.4 666.1 293.0 666.5 290.0C666.9 287.0 667.7 284.4 668.9 281.9C670.1 279.3 672.9 275.9 673.7 274.7C674.4 274.3 675.4 273.5 677.7 272.3C680.0 271.1 683.5 269.3 687.4 267.4C691.3 265.5 698.8 262.1 701.1 261.0C700.6 260.4 699.6 259.1 697.9 257.7C696.1 256.3 694.0 254.1 690.6 252.9C687.2 251.7 682.3 250.4 677.7 250.5C673.1 250.6 667.6 251.9 663.2 253.7C658.8 255.4 653.1 259.8 651.1 261.0C652.3 258.8 655.6 251.0 658.4 248.0C661.2 245.0 664.5 244.5 667.9 243.1C671.2 241.7 673.2 241.8 678.5 239.6C683.8 237.4 691.8 232.5 699.8 229.8C707.8 227.1 719.7 224.7 726.4 223.6C733.1 222.5 737.7 223.3 740.0 223.2Z" fill="url(#gBody)"/>
<path d="M667.9 243.1C669.7 242.5 673.2 241.8 678.5 239.6C683.8 237.4 691.8 232.5 699.8 229.8C707.8 227.1 719.7 224.7 726.4 223.6C733.1 222.5 733.3 222.6 740.0 223.2C746.7 223.8 757.7 224.8 766.6 227.2C775.5 229.6 785.2 233.8 793.2 237.8C801.2 241.8 811.0 248.9 814.5 251.1L804 259.7C794.0 248.7 787.0 239.9 780.0 236.0C773.0 232.1 763.1 229.3 754.8 228.0C746.5 226.7 738.3 227.1 730.0 228.0C721.7 228.9 713.1 231.0 705.1 233.4C697.1 235.8 688.2 240.6 682.0 242.2C675.8 243.8 670.2 242.9 667.9 243.1Z" fill="url(#gRim)"/>
<path d="M701.1 261.0C704.1 260.1 713.6 256.6 719.3 255.5C725.0 254.4 730.4 254.7 735.2 254.6C740.1 254.5 743.9 254.3 748.4 254.8C752.9 255.3 757.4 256.6 762.0 257.8C766.6 259.0 771.0 259.4 776.2 262.0C781.4 264.6 788.2 269.7 793.2 273.3C798.2 276.9 804.3 282.1 806.5 283.9C805.7 285.9 804.4 292.0 801.6 296.0C798.8 300.0 794.3 304.4 789.5 308.0C784.7 311.6 778.6 315.3 772.6 317.7C766.6 320.1 759.5 321.9 753.2 322.6C746.9 323.3 738.0 322.1 735.0 322.0L700 300Z" fill="url(#gM)"/>
<path d="M651.1 261.0C652.3 258.8 655.6 251.0 658.4 248.0C661.2 245.0 666.3 243.9 667.9 243.1C670.2 242.9 675.8 243.8 682.0 242.2C688.2 240.6 697.1 235.8 705.1 233.4C713.1 231.0 721.7 228.9 730.0 228.0C738.3 227.1 746.5 226.7 754.8 228.0C763.1 229.3 773.0 232.1 780.0 236.0C787.0 239.9 794.0 248.7 796.8 251.2C794.8 251.6 788.1 251.8 784.7 253.6C781.3 255.4 777.6 260.6 776.2 262.0C773.8 261.3 766.6 259.0 762.0 257.8C757.4 256.6 752.9 255.3 748.4 254.8C743.9 254.3 740.1 254.5 735.2 254.6C730.4 254.7 725.0 254.4 719.3 255.5C713.6 256.6 704.1 260.1 701.1 261.0C700.6 260.4 699.6 259.1 697.9 257.7C696.1 256.3 694.0 254.1 690.6 252.9C687.2 251.7 682.3 250.4 677.7 250.5C673.1 250.6 667.6 251.9 663.2 253.7C658.8 255.4 653.1 259.8 651.1 261.0Z" fill="url(#gD2)"/>
<path d="M673.7 274.7C675.7 274.3 681.4 273.0 685.8 272.3C690.2 271.6 695.2 269.5 700.0 270.6C704.8 271.7 710.1 276.0 714.5 279.0C718.9 282.0 723.4 285.9 726.6 288.7C729.8 291.5 732.5 294.2 733.9 296.0C735.3 297.8 734.8 299.0 735.0 299.6C733.2 300.4 728.4 302.6 724.2 304.4C720.0 306.2 713.7 308.7 709.7 310.5C705.7 312.3 702.6 314.1 700.0 315.3C697.4 316.6 696.3 316.2 693.9 318.0C691.5 319.8 688.5 323.0 685.8 325.9C683.1 328.8 681.2 330.8 677.7 335.2C674.2 339.6 669.0 346.2 665.1 352.0C661.2 357.8 657.5 364.8 654.5 369.8C651.5 374.8 649.3 378.1 647.4 382.2C645.5 386.3 644.0 391.2 643.0 394.6C642.0 398.0 641.0 398.7 641.6 402.4C642.2 406.1 644.0 411.3 646.9 416.6C649.8 421.9 654.9 428.4 659.3 434.3C663.7 440.2 669.7 446.7 673.5 452.0C677.3 457.3 680.5 462.3 682.3 466.2C684.1 470.1 683.8 473.6 684.1 475.1C681.1 473.3 672.3 469.2 666.4 464.5C660.5 459.8 654.6 453.2 648.7 446.7C642.8 440.2 636.2 432.3 630.9 425.5C625.6 418.7 620.5 411.9 616.7 406.0C612.9 400.1 609.9 395.4 607.9 390.0C605.9 384.6 605.0 379.0 604.8 373.3C604.6 367.6 605.4 361.5 606.6 355.6C607.8 349.7 610.2 342.6 611.9 337.9C613.5 333.1 614.8 330.7 616.5 327.1C618.2 323.6 621.2 318.4 622.1 316.6C622.5 318.1 623.0 322.7 624.5 325.5C626.0 328.3 628.5 331.6 631.0 333.5C633.5 335.4 638.3 336.2 639.8 336.8C640.2 336.0 640.8 334.6 642.3 331.9C643.8 329.2 646.0 324.4 648.7 320.6C651.4 316.9 655.7 312.2 658.4 309.4C661.1 306.6 663.7 304.6 664.8 303.7C665.1 303.0 666.2 302.0 666.5 299.7C666.8 297.4 666.1 293.0 666.5 290.0C666.9 287.0 667.7 284.4 668.9 281.9C670.1 279.3 672.9 275.9 673.7 274.7Z" fill="url(#gD1)"/>
<g clip-path="url(#cpD13)"><path d="M738.0 296.0C736.2 294.9 731.0 290.8 727.0 289.5C723.0 288.2 718.0 287.9 714.0 288.5C710.0 289.1 706.3 290.8 703.0 293.0C699.7 295.2 696.7 298.5 694.0 302.0C691.3 305.5 689.2 309.7 687.0 314.0C684.8 318.3 682.8 323.3 681.0 328.0C679.2 332.7 676.8 339.7 676.0 342.0L684.0 346.0C685.0 344.5 687.7 340.0 690.0 337.0C692.3 334.0 695.3 330.5 698.0 328.0C700.7 325.5 703.3 323.7 706.0 322.0C708.7 320.3 711.0 319.5 714.0 318.0C717.0 316.5 720.3 314.7 724.0 313.0C727.7 311.3 732.3 309.7 736.0 308.0C739.7 306.3 744.3 303.8 746.0 303.0Z" fill="#66c4a3" filter="url(#fBlur)"/></g>
<path d="M694.6 314.4C700 311.8 709 312.4 717.6 317.5L714.4 322.4C709 319.4 702 317 694.6 314.4Z" fill="#3f806b"/>
<path d="M636.2 372.6C637.5 381 640 387.5 643.2 393.4C641.5 385 639.4 378.6 636.2 372.6Z" fill="#6fd4b2"/>
<path d="M778.0 475.6C778.9 473.8 780.3 469.3 783.3 464.5C786.2 459.7 791.3 452.6 795.7 446.7C800.1 440.8 805.2 434.6 809.9 429.0C814.6 423.4 819.1 418.6 824.1 413.0C829.1 407.4 836.2 399.7 840.1 395.3C844.0 390.9 844.7 388.9 847.4 386.5C850.1 384.1 853.4 381.9 856.2 380.8C859.0 379.7 862.9 379.8 864.2 379.6C864.1 380.6 864.0 383.1 863.3 385.7C862.6 388.3 862.1 391.3 860.0 395.3C857.9 399.3 855.2 403.3 850.7 409.5C846.2 415.7 838.9 425.5 833.0 432.6C827.1 439.7 820.8 446.1 815.2 452.0C809.6 457.9 804.3 463.7 799.3 468.0C794.3 472.3 788.6 476.5 785.1 477.8C781.6 479.1 779.2 476.0 778.0 475.6Z" fill="url(#gEll)"/>
<path d="M776.2 262.0C776.8 261.2 778.4 258.6 780.0 257.3C781.6 256.0 784.0 254.9 786.0 254.0C788.0 253.1 789.9 252.3 792.0 252.0C794.1 251.7 796.5 251.0 798.5 252.0C800.5 253.0 802.4 255.9 803.8 258.2C805.1 260.5 806.0 263.3 806.6 266.0C807.2 268.7 807.2 271.2 807.2 274.2C807.2 277.2 806.6 282.3 806.5 283.9C805.4 283.0 802.2 280.1 800.0 278.3C797.8 276.5 795.7 275.1 793.2 273.3C790.7 271.5 787.8 269.4 785.0 267.5C782.2 265.6 777.7 262.9 776.2 262.0Z" fill="#fff"/>
<path d="M535.2 265.8L726.6 461.5L939.5 274.2M726.6 461.5L727.6 500" fill="none" stroke="#2b4a40" stroke-opacity=".75" stroke-width=".8"/>
<g font-family="'DejaVu Sans Mono','Liberation Mono',monospace" font-size="9.6" fill="#111" stroke="#111" stroke-width=".4"><text x="509.6" y="255.0">2.00</text><text x="547.6" y="341.6">z=0.00</text><text x="578.4" y="399.2">−2.00</text><text x="573.0" y="422.0">−2.00</text><text x="626.8" y="490.0">y=0.00</text><text x="804.4" y="495.6">x=0.00</text><text x="869.6" y="430.6">−2.00</text></g>
</g>
</svg><!--/PLOT3D-->

  <!-- kernel status : page (958.5,32)-(1194,60) -->
  <div id="kernel" class="abs" style="-webkit-text-stroke:.1px;left:645.5px;top:6px;width:235.5px;height:28px;background:#fff;border-radius:3px;box-shadow:0 0 4px rgba(0,0,0,.32)">
    <div class="abs" style="left:7.3px;top:7.5px;font-size:10.2px;line-height:13px;color:#666;white-space:nowrap">Kernel is idle <span style="color:#1677ff;margin-left:-1.6px">(halt...)</span></div>
    <div class="abs" style="left:101.3px;top:6px;width:1px;height:14px;background:#8c8c8c"></div>
    <div class="abs" style="left:109.2px;top:7.5px;font-size:10.2px;line-height:13px;color:#1677ff;white-space:nowrap;letter-spacing:.05px">SageMath 9.7</div>
    <svg class="ic" style="left:176px;top:9.5px" width="10" height="10" viewBox="0 0 10 10"><circle cx="5" cy="5" r="4.1" fill="none" stroke="#1677ff" stroke-width="1"/></svg>
    <div class="abs" style="left:189.7px;top:6px;width:17px;height:17px;background:#8b82f8;overflow:hidden">
      <svg class="ic" style="left:0;top:0" width="17" height="17" viewBox="0 0 17 17"><g fill="none" stroke="#f1efff" stroke-width=".8"><circle cx="8.5" cy="8.5" r="5.6"/><path d="M3.2 6.800L8.200 3L13.600 6.200L12.200 12.600L5.600 13.400ZM3.200 6.800L9.400 8.600L13.600 6.200M9.400 8.600L5.600 13.400M9.400 8.600L12.200 12.600M8.200 3L9.400 8.600"/></g><g fill="#f1efff"><circle cx="3.2" cy="6.800" r=".9"/><circle cx="8.200" cy="3" r=".9"/><circle cx="13.600" cy="6.200" r=".9"/><circle cx="12.200" cy="12.600" r=".9"/><circle cx="5.600" cy="13.400" r=".9"/><circle cx="9.400" cy="8.600" r=".9"/><circle cx="1.800" cy="1.800" r=".4"/><circle cx="15" cy="2" r=".4"/><circle cx="15.200" cy="15" r=".4"/><circle cx="2" cy="15.200" r=".4"/></g></svg>
    </div>
    <div class="abs" style="left:210.5px;top:4.5px;width:21.5px;height:16.500px;background:#fff;border:1px solid #ddd;border-radius:3px"></div>
    <svg class="ic" style="left:216px;top:8px" width="11" height="10" viewBox="0 0 11 10"><path d="M5 1.600H1.600a.8.8 0 0 0-.8.800V8.400a.8.800 0 0 0 .8.800H7.600a.8.800 0 0 0 .8-.8V5.600" fill="none" stroke="#222" stroke-width="1.300"/><path d="M4.400 5.800L9.600 .8" stroke="#222" stroke-width="1.400" fill="none"/><path d="M6.400 .2H10.400V4.200Z" fill="#222"/></svg>
  </div>

  <!-- zoom box : page (996,467.5)-(1194,491) -->
  <div id="zoombox" class="abs" style="left:683px;top:441.5px;width:198px;height:23.500px;background:#fff;border-radius:3px;box-shadow:0 0 4px rgba(0,0,0,.32)">
    <svg class="ic" style="left:11.500px;top:8px" width="12" height="11" viewBox="0 0 12 11"><path d="M.6 2.200L4 .8L8 2.200L11.400 .8V8.800L8 10.200L4 8.800L.6 10.200ZM4 .8V8.800M8 2.200V10.200" fill="none" stroke="#222" stroke-width="1.100" stroke-linejoin="round"/></svg>
    <svg class="ic" style="left:37px;top:9px" width="12" height="9" viewBox="0 0 12 9"><path d="M.6 0V9M11.400 0V9M1.600 4.500H10.400" stroke="#222" stroke-width="1.100" fill="none"/><path d="M3 3L1.400 4.500L3 6M9 3L10.600 4.500L9 6" stroke="#222" stroke-width=".9" fill="none"/></svg>
    <svg class="ic" style="left:63px;top:13px" width="10" height="1.200"><rect width="10" height="1.200" fill="#222"/></svg>
    <svg class="ic" style="left:88.500px;top:8.500px" width="9.500" height="9.500" viewBox="0 0 9.500 9.500"><path d="M0 4.750H9.500M4.750 0V9.500" stroke="#222" stroke-width="1.200" fill="none"/></svg>
    <div class="abs" style="left:113px;top:6.500px;font-size:11.200px;line-height:13px;color:#222">100%</div>
    <div class="abs" style="left:148px;top:12px;width:46px;height:2.500px;background:#f0f0f0;border-radius:1px"></div>
    <div class="abs" style="left:148px;top:12px;width:8px;height:2.500px;background:#91caff;border-radius:1px"></div>
    <div class="abs" style="left:154.300px;top:8.200px;width:10px;height:10px;border-radius:50%;background:#fff;border:1.500px solid #91caff"></div>
  </div>

  <!-- tool palette : page (320,32)-(353,286) -->
  <div id="palette" class="abs" style="left:7px;top:6px;width:33px;height:254px;background:#fff;border-radius:3px;box-shadow:0 0 4px rgba(0,0,0,.32)">
    <div class="abs" style="left:0;top:23px;width:33px;height:23px;background:#337ab7;border-radius:4px"></div>
    <!-- hand -->
    <svg class="ic" style="left:12px;top:5px" width="11" height="12" viewBox="0 0 11 12"><path d="M2.6 6.8L1.5 5.4a.8.8 0 0 0-1.2 1L2.6 10a3 3 0 0 0 2.4 1.4H7.4A2.6 2.6 0 0 0 10 8.8V3.4a.7.7 0 0 0-1.4 0V5.6V2.2a.7.7 0 0 0-1.4 0V5.4V1.3a.7.7 0 0 0-1.4 0V5.4V2a.7.7 0 0 0-1.4 0V5.6V7" fill="none" stroke="#333" stroke-width=".9" stroke-linejoin="round"/></svg>
    <!-- cursor -->
    <svg class="ic" style="left:13px;top:28px" width="9" height="12" viewBox="0 0 9 12"><path d="M0.4 0.2V9.8L2.7 7.6L4.5 11.7L6.2 11L4.4 7H7.6Z" fill="#fff"/></svg>
    <!-- line -->
    <svg class="ic" style="left:11px;top:54px" width="12" height="7" viewBox="0 0 12 7"><path d="M0.8 5.6L4 3L6.6 4.6L11.2 0.8" fill="none" stroke="#222" stroke-width="1.1"/><circle cx=".9" cy="5.6" r=".9" fill="#222"/><circle cx="4" cy="3" r=".9" fill="#222"/><circle cx="6.6" cy="4.6" r=".9" fill="#222"/><circle cx="11.1" cy=".9" r=".9" fill="#222"/></svg>
    <!-- text -->
    <div class="abs" style="left:12.800px;top:74.700px;font-family:'Liberation Serif',serif;font-size:10.800px;line-height:12px;color:#222">T</div>
    <svg class="ic" style="left:18.600px;top:80.500px" width="2.800" height="4" viewBox="0 0 3 5"><path d="M0 .5H3M0 2H3M0 3.5H3M0 4.8H3" stroke="#333" stroke-width=".7" fill="none"/></svg>
    <!-- note -->
    <svg class="ic" style="left:12px;top:98px" width="10" height="10" viewBox="0 0 10 10"><path d="M1.3.6H8.7a.7.7 0 0 1 .7.7V6.8L6.8 9.4H1.3a.7.7 0 0 1-.7-.7V1.3a.7.7 0 0 1 .7-.7Z" fill="none" stroke="#222" stroke-width="1.1"/><path d="M2.4 3H7.6M2.4 4.8H7.6M2.4 6.6H5.6" stroke="#222" stroke-width=".9" fill="none"/><path d="M6.6 9.2V6.8H9.2" stroke="#222" stroke-width=".9" fill="none"/></svg>
    <!-- pencil -->
    <svg class="ic" style="left:11px;top:121px" width="12" height="12" viewBox="0 0 12 12"><path d="M2 8L8.8 1.2a.9.9 0 0 1 1.2 0l.9.9a.9.9 0 0 1 0 1.200L4.100 10.100Z" fill="#222"/><path d="M1.500 8.600L3.500 10.600L0.600 11.500Z" fill="none" stroke="#222" stroke-width=".7"/><path d="M0.500 11.600L1.600 11.200L0.900 10.500Z" fill="#222"/></svg>
    <!-- jupyter -->
    <svg class="ic" style="left:12px;top:143px" width="10" height="12" viewBox="0 0 10 12"><circle cx="5" cy="6.100" r="4" fill="none" stroke="#9a9a9a" stroke-width=".7"/><path d="M1.300 3Q5 -0.900 8.700 3" fill="none" stroke="#333" stroke-width="1"/><path d="M1.300 9.200Q5 13.100 8.700 9.200" fill="none" stroke="#333" stroke-width="1"/><path d="M2 6.100H8" stroke="#666" stroke-width="1.400" stroke-dasharray=".9 .4"/><circle cx="8.600" cy=".8" r=".7" fill="#333"/><circle cx="1.600" cy="11.200" r=".7" fill="#333"/><circle cx="1.400" cy="1.600" r=".4" fill="#333"/></svg>
    <!-- icons -->
    <svg class="ic" style="left:11px;top:167px" width="12" height="11" viewBox="0 0 12 11"><path d="M2.800 4.800L0.500 2.400a1.300 1.300 0 0 1 2.300-1.400a1.300 1.300 0 0 1 2.300 1.400Z" fill="#111"/><path d="M7.600 4.200V0.900L11.200 0.200V3.400" fill="none" stroke="#111" stroke-width="1"/><circle cx="6.900" cy="4.200" r="1" fill="#111"/><circle cx="10.500" cy="3.500" r="1" fill="#111"/><path d="M0.300 6.600H1.600L2.200 5.900H4.200L4.800 6.600H5.700V10.600H0.300Z" fill="#111"/><circle cx="3" cy="8.600" r="1" fill="#fff"/><path d="M9.900 5.600L7.500 8.600H9.100L8.300 11L11 7.700H9.300Z" fill="#111"/></svg>
    <!-- comments -->
    <svg class="ic" style="left:11px;top:190px" width="12" height="12" viewBox="0 0 12 12"><path d="M5 .6A4.400 3.900 0 0 0 1.600 7L1.200 9.200L3.400 8.200A4.400 3.900 0 1 0 5 .6Z" fill="#fff" stroke="#222" stroke-width="1"/><path d="M9.600 3.800A3.600 3.300 0 0 1 10.800 9L11.100 11.200L9 10.200A4 3.400 0 0 1 4.400 9.400" fill="none" stroke="#222" stroke-width="1"/><path d="M3.200 4.500H6.800" stroke="#888" stroke-width=".9" stroke-dasharray=".8 .6"/></svg>
    <!-- clock -->
    <svg class="ic" style="left:11px;top:213px" width="12" height="11" viewBox="0 0 12 11"><path d="M9.400 3A4.700 4.700 0 1 0 9.800 7.400" fill="none" stroke="#222" stroke-width="1.100"/><path d="M5.200 2.600V5.900L7 7.300" fill="none" stroke="#222" stroke-width="1.100"/><path d="M8.400 4.900H11.600" stroke="#222" stroke-width="1"/></svg>
    <!-- frame -->
    <svg class="ic" style="left:11px;top:236px" width="12" height="12" viewBox="0 0 12 12"><path d="M1.500 0V12M10.500 0V12M0 1.500H12M0 10.500H12" stroke="#666" stroke-width=".9" fill="none"/></svg>
  </div>
</div>

<div id="hdiv" class="abs"></div>

<!-- ================= NOTES ================= -->
<div id="notes" class="abs">
  <div class="phead abs">
    <div class="abs" style="left:1px;top:7px;font-size:10.6px;line-height:13px;color:#222;white-space:nowrap">2 / 3</div>
    <div class="abs" style="left:25px;top:2px;width:1px;height:21px;background:#a8a8a8"></div>
    <svg class="ic" style="left:30px;top:9.500px" width="9" height="9" viewBox="0 0 11 11"><path d="M0.500 10.400H10" stroke="#333" stroke-width="1.100" fill="none"/><path d="M2.200 7.800L2.600 5.800L7.400 1.100a.8.800 0 0 1 1.100 0l.7.700a.8.800 0 0 1 0 1.100L4.400 7.700Z" fill="none" stroke="#333" stroke-width="1.100"/></svg>
    <div class="abs" style="left:42.500px;top:8px;font-size:10px;line-height:13px;color:#222;white-space:nowrap;letter-spacing:-.22px">Speaker Notes</div>
    <div class="abs hx" style="left:565px;top:6px;line-height:14px;font-size:11.500px">X</div>
  </div>
  <div class="abs" style="left:4.500px;top:28.600px;font-size:15px;line-height:21.100px;color:#212529;white-space:nowrap;-webkit-text-stroke:.25px">Explain how UW freshman <b>Bill Cauchois</b> <span style="letter-spacing:.1px">implemented the first</span> <span class="mono" style="font-size:13px;margin-left:6.500px">implicit_plot3d</span><br>command as a summer project.</div>
</div>
<div class="abs" style="left:313px;top:600px;width:588px;height:20px;background:linear-gradient(to bottom,rgba(0,0,0,0),rgba(0,0,0,.045))"></div>
<div id="vdiv2" class="abs"></div>
<div id="toc" class="abs">
  <div class="phead abs">
    <svg class="ic" style="left:5.800px;top:10.200px" width="9" height="8" viewBox="0 0 9 8"><path d="M3.200 0.500H9M3.200 5.200H9" stroke="#555" stroke-width=".9" fill="none"/><path d="M0 2.900H9M0 7.500H9" stroke="#333" stroke-width="1" fill="none"/></svg>
    <div class="abs" style="left:19.200px;top:8px;font-size:10px;line-height:13px;color:#222;white-space:nowrap;letter-spacing:-.2px">Table of Contents</div>
    <div class="abs hx" style="left:273.500px;top:6.400px;line-height:14px;font-size:11.500px">X</div>
  </div>
  <div class="abs" style="left:22.500px;top:36.400px;font-size:14.500px;line-height:20.700px;color:#1677ff;font-weight:bold;white-space:nowrap">1. How to plot using SageMath<br>2. You can create 3D plots</div>
</div>

</body>
</html>
